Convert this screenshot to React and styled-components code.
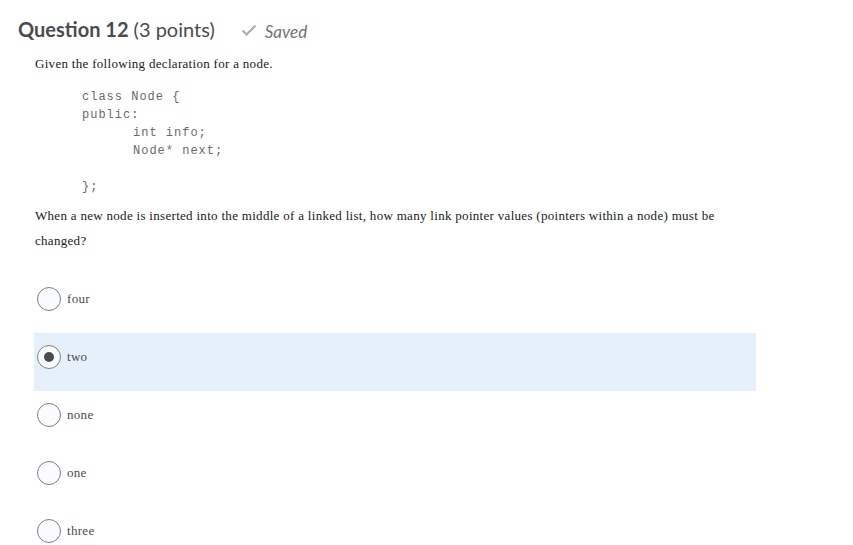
import React from 'react'
import styled, { createGlobalStyle } from 'styled-components'

const GlobalStyle = createGlobalStyle`
  html, body {
    margin: 0;
    padding: 0;
    background: #ffffff;
  }
`

const options = ['four', 'two', 'none', 'one', 'three']
const selected = 'two'

export default function App() {
  return (
    <Page>
      <GlobalStyle />
      <Header>
        <Title>
          <strong>Question 12</strong> (3 points)
        </Title>
        <Status>
          <svg width="16" height="12" viewBox="0 0 16 12">
            <path d="M1.5 6.5 L5.5 10.5 L14.5 1.5" fill="none" stroke="#a8adb0" strokeWidth="2" />
          </svg>
          <span>Saved</span>
        </Status>
      </Header>
      <Body>
        <Prompt>Given the following declaration for a node.</Prompt>
        <Code>
          <CodeLine>class Node {'{'}</CodeLine>
          <CodeLine>public:</CodeLine>
          <CodeLine indent>int info;</CodeLine>
          <CodeLine indent>Node* next;</CodeLine>
          <CodeLine>&nbsp;</CodeLine>
          <CodeLine>{'};'}</CodeLine>
        </Code>
        <Question>
          When a new node is inserted into the middle of a linked list, how many link pointer values (pointers within a node) must be changed?
        </Question>
        <Options>
          {options.map((o) => (
            <Option key={o} active={o === selected}>
              <Radio checked={o === selected} />
              <OptionLabel>{o}</OptionLabel>
            </Option>
          ))}
        </Options>
      </Body>
    </Page>
  )
}

const Page = styled.div`
  width: 853px;
  padding-top: 17px;
`

const Header = styled.div`
  display: flex;
  align-items: baseline;
  padding-left: 18px;
  height: 24px;
`

const Title = styled.h1`
  margin: 0;
  font-family: Lato, sans-serif;
  font-size: 20px;
  line-height: 24px;
  font-weight: 400;
  color: #494c4e;
  strong {
    font-weight: 700;
  }
`

const Status = styled.div`
  display: flex;
  align-items: center;
  gap: 8px;
  margin-left: 26px;
  font-family: Lato, sans-serif;
  font-style: italic;
  font-size: 17px;
  color: #6e7376;
  svg {
    position: relative;
    top: -1px;
  }
`

const Body = styled.div`
  padding-left: 35px;
`

const Prompt = styled.p`
  margin: 14px 0 0 0;
  font-family: 'Liberation Serif', serif;
  font-size: 13px;
  letter-spacing: 0.3px;
  line-height: 18px;
  color: #202122;
`

const Code = styled.div`
  margin-top: 15px;
  padding-left: 47px;
  font-family: 'Liberation Mono', monospace;
  font-size: 12px;
  letter-spacing: 1px;
  color: #6a6a6a;
`

const CodeLine = styled.div`
  line-height: 18px;
  height: 18px;
  white-space: pre;
  padding-left: ${(p) => (p.indent ? '51px' : '0')};
`

const Question = styled.p`
  margin: 7px 0 0 0;
  width: 700px;
  font-family: 'Liberation Serif', serif;
  font-size: 13px;
  letter-spacing: 0.3px;
  line-height: 25px;
  color: #202122;
`

const Options = styled.div`
  margin-top: 22px;
  margin-left: -1px;
  width: 722px;
`

const Option = styled.div`
  display: flex;
  align-items: flex-start;
  gap: 6px;
  height: 58px;
  box-sizing: border-box;
  padding: 12px 0 0 3px;
  background: ${(p) => (p.active ? '#e6f0fa' : 'transparent')};
`

const Radio = styled.span`
  position: relative;
  width: 22px;
  height: 22px;
  flex: none;
  border: 1px solid #7c8083;
  border-radius: 50%;
  background: #f9fbff;
  &::after {
    content: '';
    display: ${(p) => (p.checked ? 'block' : 'none')};
    position: absolute;
    left: 6px;
    top: 6px;
    width: 10px;
    height: 10px;
    border-radius: 50%;
    background: #494c4e;
  }
`

const OptionLabel = styled.span`
  font-family: 'Liberation Serif', serif;
  font-size: 13px;
  letter-spacing: 0.3px;
  line-height: 24px;
  color: #494c4e;
`
